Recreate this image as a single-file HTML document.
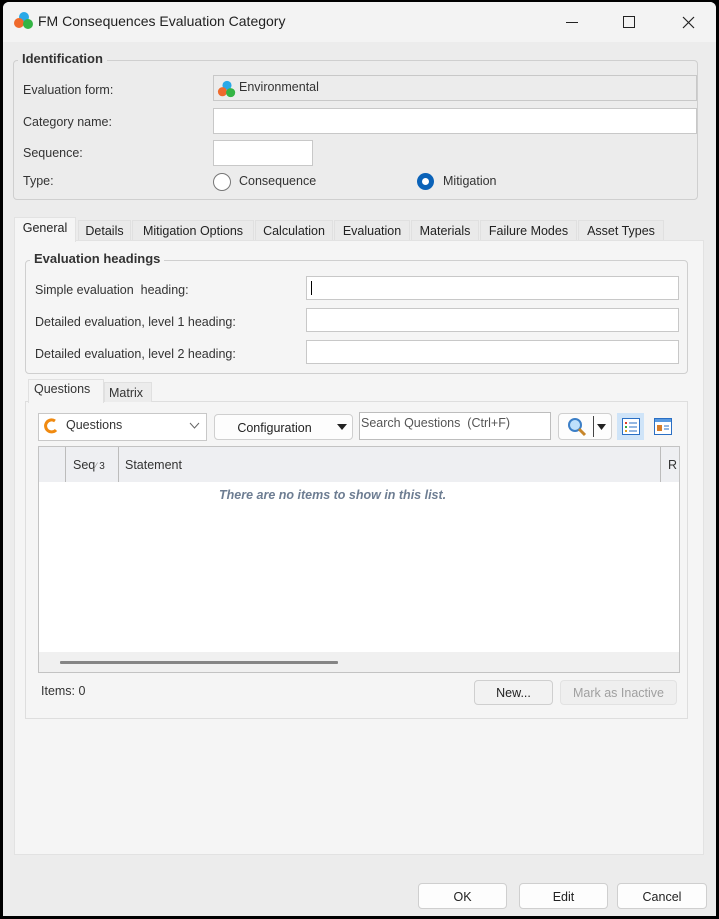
<!DOCTYPE html>
<html><head><meta charset="utf-8"><style>
*{box-sizing:border-box;margin:0;padding:0}
body{width:719px;height:919px;background:#000;position:relative;overflow:hidden;font-family:"Liberation Sans",sans-serif;font-size:12.5px;color:#333}
.a{position:absolute}
.win{left:3px;top:2px;width:713px;height:914px;background:#ececec;border-radius:6px 6px 0 0;overflow:hidden}
.t{position:absolute;white-space:nowrap}
.inp{position:absolute;background:#fff;border:1px solid #c8c8c8}
.grp{position:absolute;border:1px solid #cfcfcf;border-radius:4px}
.gt{position:absolute;font-weight:bold;font-size:13px;color:#333;padding:0 4px;white-space:nowrap}
.tab{position:absolute;top:218px;height:22px;background:#eaeaea;border:1px solid #e0e0e0;border-bottom:none;padding:3px 0 0;text-align:center;white-space:nowrap;color:#222}
.btn{position:absolute;background:#fdfdfd;border:1px solid #cfcfcf;border-radius:4px;text-align:center;color:#222}
</style></head><body>
<div class="a win">
 <div class="a" style="left:0;top:0;width:713px;height:40px;background:#f3f3f3"></div>
 <svg class="a" style="left:10px;top:8px" width="22" height="22" viewBox="0 0 22 22"><circle cx="11" cy="7" r="5" fill="#29a9e8"/><circle cx="6" cy="13" r="5" fill="#ef6a2c"/><circle cx="15" cy="14" r="5" fill="#34b444"/></svg>
 <div class="t" style="left:35px;top:11px;font-size:14px;color:#222">FM Consequences Evaluation Category</div>
 <div class="a" style="left:563px;top:20px;width:12px;height:1px;background:#222"></div>
 <div class="a" style="left:620px;top:14px;width:12px;height:12px;border:1px solid #222"></div>
 <svg class="a" style="left:679px;top:14px" width="13" height="13"><path d="M1 1L12 12M12 1L1 12" stroke="#222" stroke-width="1.2"/></svg>

 <div class="grp" style="left:10px;top:58px;width:685px;height:140px"></div>
 <div class="gt" style="left:15px;top:49px;background:#ececec">Identification</div>
 <div class="t" style="left:20px;top:81px">Evaluation form:</div>
 <div class="t" style="left:20px;top:113px">Category name:</div>
 <div class="t" style="left:20px;top:144px">Sequence:</div>
 <div class="t" style="left:20px;top:172px">Type:</div>
 <div class="inp" style="left:210px;top:73px;width:484px;height:26px;background:#ececec"></div>
 <svg class="a" style="left:214px;top:77px" width="20" height="20" viewBox="0 0 22 22"><circle cx="11" cy="7" r="5" fill="#29a9e8"/><circle cx="6" cy="14" r="5" fill="#ef6a2c"/><circle cx="15" cy="15" r="5" fill="#34b444"/></svg>
 <div class="t" style="left:236px;top:78px">Environmental</div>
 <div class="inp" style="left:210px;top:106px;width:484px;height:26px"></div>
 <div class="inp" style="left:210px;top:138px;width:100px;height:26px"></div>
 <div class="a" style="left:210px;top:171px;width:18px;height:18px;border:1px solid #777;border-radius:50%;background:#fff"></div>
 <div class="t" style="left:236px;top:172px">Consequence</div>
 <div class="a" style="left:414px;top:171px;width:17px;height:17px;border-radius:50%;background:#0a62b8"></div>
 <div class="a" style="left:419px;top:176px;width:7px;height:7px;border-radius:50%;background:#fff"></div>
 <div class="t" style="left:440px;top:172px">Mitigation</div>

 <div class="tab" style="left:75px;width:53px">Details</div>
 <div class="tab" style="left:129px;width:122px">Mitigation Options</div>
 <div class="tab" style="left:252px;width:78px">Calculation</div>
 <div class="tab" style="left:331px;width:76px">Evaluation</div>
 <div class="tab" style="left:408px;width:68px">Materials</div>
 <div class="tab" style="left:477px;width:97px">Failure Modes</div>
 <div class="tab" style="left:575px;width:86px">Asset Types</div>
 <div class="a" style="left:11px;top:238px;width:690px;height:615px;background:#f5f5f5;border:1px solid #e2e2e2"></div>
 <div class="tab" style="left:11px;top:215px;width:62px;height:25px;background:#f5f5f5;border-color:#e2e2e2">General</div>

 <div class="grp" style="left:22px;top:258px;width:663px;height:114px"></div>
 <div class="gt" style="left:27px;top:249px;background:#f5f5f5">Evaluation headings</div>
 <div class="t" style="left:32px;top:281px">Simple evaluation&nbsp; heading:</div>
 <div class="t" style="left:32px;top:313px">Detailed evaluation, level 1 heading:</div>
 <div class="t" style="left:32px;top:345px">Detailed evaluation, level 2 heading:</div>
 <div class="inp" style="left:303px;top:274px;width:373px;height:24px"></div>
 <div class="a" style="left:308px;top:279px;width:1px;height:14px;background:#000"></div>
 <div class="inp" style="left:303px;top:306px;width:373px;height:24px"></div>
 <div class="inp" style="left:303px;top:338px;width:373px;height:24px"></div>

 <div class="a" style="left:22px;top:399px;width:663px;height:318px;border:1px solid #dedede;background:#f5f5f5"></div>
 <div class="a" style="left:101px;top:380px;width:48px;height:20px;border:1px solid #e0e0e0;border-bottom:none;background:#ececec"></div>
 <div class="t" style="left:106px;top:384px">Matrix</div>
 <div class="a" style="left:25px;top:377px;width:76px;height:24px;border:1px solid #e0e0e0;border-bottom:none;background:#f5f5f5"></div>
 <div class="t" style="left:31px;top:380px">Questions</div>

 <div class="inp" style="left:35px;top:411px;width:169px;height:28px"></div>
 <svg class="a" style="left:39px;top:416px" width="18" height="16" viewBox="0 0 18 16"><path d="M13 3A6 6 0 1 0 14 12" stroke="#f08a10" stroke-width="3" fill="none"/></svg>
 <div class="t" style="left:63px;top:416px">Questions</div>
 <svg class="a" style="left:186px;top:420px" width="11" height="8"><path d="M1 1L5.5 6L10 1" stroke="#666" fill="none"/></svg>
 <div class="btn" style="left:211px;top:412px;width:139px;height:26px;padding-top:6px;padding-right:18px">Configuration</div>
 <svg class="a" style="left:334px;top:422px" width="10" height="6"><path d="M0 0H10L5 6Z" fill="#222"/></svg>
 <div class="inp" style="left:356px;top:410px;width:192px;height:28px;border-color:#bdbdbd"></div>
 <div class="t" style="left:358px;top:414px;color:#555">Search Questions&nbsp; (Ctrl+F)</div>
 <div class="btn" style="left:555px;top:411px;width:54px;height:27px"></div>
 <svg class="a" style="left:563px;top:414px" width="22" height="22"><circle cx="9" cy="9" r="6" fill="#bfe0fb" stroke="#3c7fc7" stroke-width="2"/><path d="M13 13L19 19" stroke="#c7862a" stroke-width="3"/></svg>
 <div class="a" style="left:590px;top:414px;width:1px;height:21px;background:#444"></div>
 <svg class="a" style="left:594px;top:422px" width="9" height="6"><path d="M0 0H9L4.5 6Z" fill="#222"/></svg>
 <div class="a" style="left:614px;top:411px;width:27px;height:27px;background:#cfe4f8"></div>
 <svg class="a" style="left:619px;top:416px" width="18" height="17"><rect x="0.5" y="0.5" width="17" height="16" fill="#fff" stroke="#2a6fc4"/><rect x="3" y="4" width="2" height="2" fill="#e03b2b"/><rect x="3" y="8" width="2" height="2" fill="#38a83a"/><rect x="3" y="12" width="2" height="2" fill="#e0a020"/><path d="M7 5H15M7 9H15M7 13H15" stroke="#2a6fc4"/></svg>
 <svg class="a" style="left:651px;top:416px" width="18" height="17"><rect x="0.5" y="0.5" width="17" height="16" fill="#fff" stroke="#2a6fc4"/><rect x="1" y="1" width="16" height="3" fill="#5a9ae0"/><rect x="3" y="7" width="5" height="6" fill="#d67d2a"/><path d="M10 8H15M10 11H15" stroke="#2a6fc4"/></svg>

 <div class="a" style="left:35px;top:444px;width:642px;height:227px;border:1px solid #c3c3c3;background:#fff"></div>
 <div class="a" style="left:36px;top:445px;width:640px;height:35px;background:#eeeff2"></div>
 <div class="a" style="left:62px;top:445px;width:1px;height:35px;background:#bcbcbc"></div>
 <div class="a" style="left:115px;top:445px;width:1px;height:35px;background:#bcbcbc"></div>
 <div class="a" style="left:657px;top:445px;width:1px;height:35px;background:#bcbcbc"></div>
 <div class="t" style="left:70px;top:456px">Seq<span style="font-size:9px;color:#888">⁄ </span><span style="font-size:10px">3</span></div>
 <div class="t" style="left:122px;top:456px">Statement</div>
 <div class="t" style="left:665px;top:456px">R</div>
 <div class="t" style="left:216px;top:486px;font-weight:bold;font-style:italic;color:#6d7d92">There are no items to show in this list.</div>
 <div class="a" style="left:36px;top:650px;width:640px;height:20px;background:#f0f0f0"></div>
 <div class="a" style="left:57px;top:659px;width:278px;height:3px;background:#858585;border-radius:1px"></div>

 <div class="t" style="left:38px;top:682px">Items: 0</div>
 <div class="btn" style="left:471px;top:678px;width:79px;height:25px;padding-top:5px;background:#f2f2f2">New...</div>
 <div class="btn" style="left:557px;top:678px;width:117px;height:25px;padding-top:5px;color:#a0a0a0;background:#efefef;border-color:#e2e2e2">Mark as Inactive</div>

 <div class="btn" style="left:415px;top:881px;width:89px;height:26px;padding-top:6px">OK</div>
 <div class="btn" style="left:516px;top:881px;width:89px;height:26px;padding-top:6px">Edit</div>
 <div class="btn" style="left:614px;top:881px;width:90px;height:26px;padding-top:6px">Cancel</div>
</div>
</body></html>
